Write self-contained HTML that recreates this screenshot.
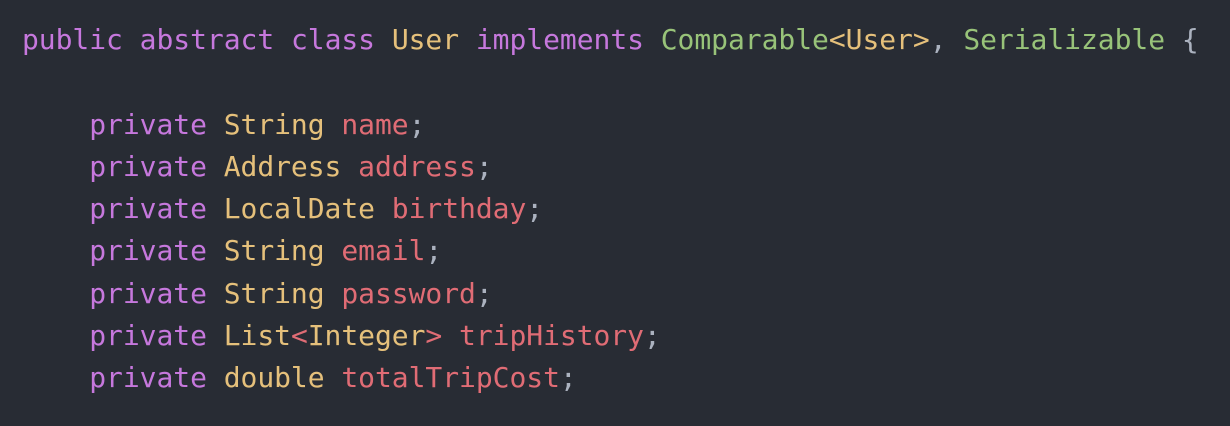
<!DOCTYPE html>
<html><head><style>
html,body{margin:0;padding:0;background:#282c34;width:1230px;height:426px;overflow:hidden}
pre{margin:0;padding:19px 0 0 22px;font-family:"DejaVu Sans Mono","Liberation Mono",monospace;font-size:28px;line-height:42.3px;color:#abb2bf;letter-spacing:-0.05px}
.k{color:#c678dd}.t{color:#e5c07b}.v{color:#e06c75}.g{color:#98c379}
</style></head><body><pre><span class="k">public</span> <span class="k">abstract</span> <span class="k">class</span> <span class="t">User</span> <span class="k">implements</span> <span class="g">Comparable</span><span class="t">&lt;User&gt;</span>, <span class="g">Serializable</span> {

    <span class="k">private</span> <span class="t">String</span> <span class="v">name</span>;
    <span class="k">private</span> <span class="t">Address</span> <span class="v">address</span>;
    <span class="k">private</span> <span class="t">LocalDate</span> <span class="v">birthday</span>;
    <span class="k">private</span> <span class="t">String</span> <span class="v">email</span>;
    <span class="k">private</span> <span class="t">String</span> <span class="v">password</span>;
    <span class="k">private</span> <span class="t">List</span><span class="v">&lt;</span><span class="t">Integer</span><span class="v">&gt;</span> <span class="v">tripHistory</span>;
    <span class="k">private</span> <span class="t">double</span> <span class="v">totalTripCost</span>;
</pre></body></html>
